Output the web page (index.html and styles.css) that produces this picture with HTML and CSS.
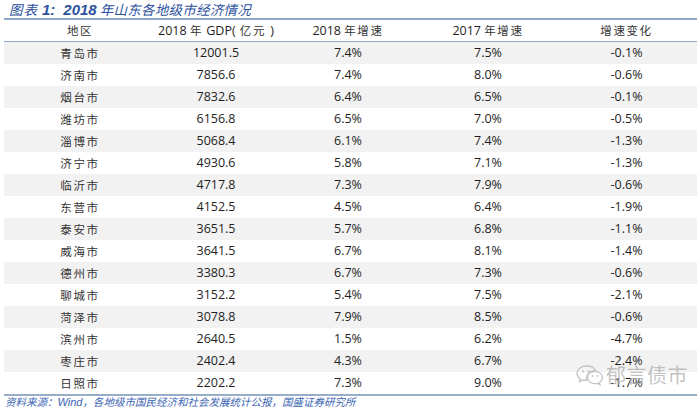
FILE: index.html
```html
<!DOCTYPE html>
<html lang="zh">
<head>
<meta charset="utf-8">
<link rel="stylesheet" href="styles.css">
</head>
<body>
<div class="page">
  <div class="title"><span class="cn lead">图表</span><span class="num one">1:</span><span class="num year">2018</span><span class="cn">年山东各地级市经济情况</span></div>
  <table class="data">
    <colgroup>
      <col class="c1"><col class="c2"><col class="c3"><col class="c4"><col class="c5">
    </colgroup>
    <thead>
      <tr>
        <th class="cn">地区</th>
        <th><span class="n">2018</span> <span class="cn">年</span> <span class="n">GDP(</span><span class="cn"> 亿元 </span><span class="n">)</span></th>
        <th><span class="n">2018</span> <span class="cn">年增速</span></th>
        <th><span class="n">2017</span> <span class="cn">年增速</span></th>
        <th class="cn">增速变化</th>
      </tr>
    </thead>
    <tbody>
      <tr class="g"><td class="cn">青岛市</td><td>12001.5</td><td>7.4%</td><td>7.5%</td><td>-0.1%</td></tr>
      <tr><td class="cn">济南市</td><td>7856.6</td><td>7.4%</td><td>8.0%</td><td>-0.6%</td></tr>
      <tr class="g"><td class="cn">烟台市</td><td>7832.6</td><td>6.4%</td><td>6.5%</td><td>-0.1%</td></tr>
      <tr><td class="cn">潍坊市</td><td>6156.8</td><td>6.5%</td><td>7.0%</td><td>-0.5%</td></tr>
      <tr class="g"><td class="cn">淄博市</td><td>5068.4</td><td>6.1%</td><td>7.4%</td><td>-1.3%</td></tr>
      <tr><td class="cn">济宁市</td><td>4930.6</td><td>5.8%</td><td>7.1%</td><td>-1.3%</td></tr>
      <tr class="g"><td class="cn">临沂市</td><td>4717.8</td><td>7.3%</td><td>7.9%</td><td>-0.6%</td></tr>
      <tr><td class="cn">东营市</td><td>4152.5</td><td>4.5%</td><td>6.4%</td><td>-1.9%</td></tr>
      <tr class="g"><td class="cn">泰安市</td><td>3651.5</td><td>5.7%</td><td>6.8%</td><td>-1.1%</td></tr>
      <tr><td class="cn">威海市</td><td>3641.5</td><td>6.7%</td><td>8.1%</td><td>-1.4%</td></tr>
      <tr class="g"><td class="cn">德州市</td><td>3380.3</td><td>6.7%</td><td>7.3%</td><td>-0.6%</td></tr>
      <tr><td class="cn">聊城市</td><td>3152.2</td><td>5.4%</td><td>7.5%</td><td>-2.1%</td></tr>
      <tr class="g"><td class="cn">菏泽市</td><td>3078.8</td><td>7.9%</td><td>8.5%</td><td>-0.6%</td></tr>
      <tr><td class="cn">滨州市</td><td>2640.5</td><td>1.5%</td><td>6.2%</td><td>-4.7%</td></tr>
      <tr class="g"><td class="cn">枣庄市</td><td>2402.4</td><td>4.3%</td><td>6.7%</td><td>-2.4%</td></tr>
      <tr><td class="cn">日照市</td><td>2202.2</td><td>7.3%</td><td>9.0%</td><td>-1.7%</td></tr>
    </tbody>
  </table>
  <div class="source">资料来源：<span class="en">Wind</span>，各地级市国民经济和社会发展统计公报，国盛证券研究所</div>
  <div class="watermark">
    <svg class="wx" width="28" height="22" viewBox="0 0 28 22">
      <path d="M11 2C5.8 2 2 5.3 2 9.2c0 2.3 1.3 4.2 3.3 5.5L4.5 17.6l3.2-1.7c1 .3 2.1.5 3.3.5.3 0 .6 0 .9 0-.3-.8-.4-1.600-.4-2.4 0-4.1 3.9-7.3 8.6-7.3h.6C19.7 4 15.700 2 11 2z" fill="none" stroke="#c4c4c4" stroke-width="1.3"/>
      <circle cx="8" cy="7.5" r="1.1" fill="#c4c4c4"/>
      <circle cx="13.5" cy="7.5" r="1.1" fill="#c4c4c4"/>
      <path d="M20 7.3c-4.1 0-7.4 2.8-7.4 6.2s3.3 6.2 7.4 6.2c.9 0 1.7-.1 2.5-.4l2.6 1.4-.6-2.3c1.7-1.1 2.9-3 2.9-4.9 0-3.4-3.3-6.2-7.4-6.2z" fill="none" stroke="#c4c4c4" stroke-width="1.3"/>
      <circle cx="17.5" cy="12" r="0.9" fill="#c4c4c4"/>
      <circle cx="22.5" cy="12" r="0.9" fill="#c4c4c4"/>
    </svg>
    <span class="wm-text">郁言债市</span>
  </div>
</div>
</body>
</html>
```
FILE: styles.css
```css
html, body {
  margin: 0;
  padding: 0;
  background: #ffffff;
}

.page {
  position: relative;
  width: 700px;
  height: 408px;
  overflow: hidden;
  font-family: "Open Sans", "Noto Sans CJK SC", sans-serif;
  color: #1e1e1e;
}

.title {
  display: flex;
  align-items: baseline;
  height: 18px;
  line-height: 18px;
  padding-left: 9px;
  color: #2d52a0;
  font-style: italic;
  white-space: nowrap;
}

.title .cn {
  font-family: "Noto Sans CJK SC", sans-serif;
  font-weight: 400;
  font-size: 13.5px;
  letter-spacing: 0.25px;
}

.title .lead {
  letter-spacing: 1px;
  margin-right: 4px;
}

.title .num {
  font-family: "Liberation Sans", sans-serif;
  font-weight: 700;
  font-size: 15px;
}

.title .one {
  margin-right: 8px;
}

.title .year {
  margin-right: 3px;
}

.data {
  margin-left: 4px;
  width: 693px;
  border-collapse: separate;
  border-spacing: 0;
  table-layout: fixed;
  border-top: 2px solid #8ea8cb;
  border-bottom: 2px solid #97adc8;
}

.c1 { width: 152px; }
.c2 { width: 120px; }
.c3 { width: 144px; }
.c4 { width: 136px; }
.c5 { width: 141px; }

.data th,
.data td {
  padding: 0;
  text-align: center;
  white-space: nowrap;
  font-size: 12.5px;
  font-weight: 400;
  color: #1e1e1e;
}

.data th {
  height: 21px;
  line-height: 21px;
  border-bottom: 1px solid #8ea8cb;
}

.data td {
  height: 22px;
  line-height: 22px;
}

.data .g td {
  background: #f2f2f2;
}

.data .cn,
.data th .cn {
  font-family: "Noto Sans CJK SC", sans-serif;
  font-size: 11.5px;
  letter-spacing: 1.6px;
  color: #333333;
}

.data th .n {
  font-family: "Open Sans", sans-serif;
  font-size: 12.5px;
}

.source {
  height: 12px;
  line-height: 12px;
  padding-left: 5px;
  font-family: "Noto Sans CJK SC", sans-serif;
  font-size: 10.5px;
  font-style: italic;
  color: #3a64b4;
  white-space: nowrap;
}

.source .en {
  font-family: "Liberation Sans", sans-serif;
  font-size: 11px;
}

.watermark {
  position: absolute;
  left: 575px;
  top: 363px;
  display: flex;
  align-items: center;
  gap: 3px;
}

.wm-text {
  font-family: "Noto Sans CJK SC", sans-serif;
  font-size: 20px;
  line-height: 24px;
  color: rgba(175, 175, 175, 0.75);
  letter-spacing: 0.5px;
}
```
